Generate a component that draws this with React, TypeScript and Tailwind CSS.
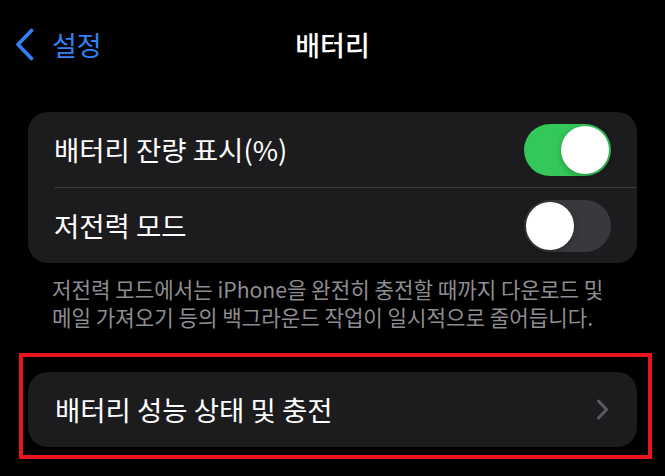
import React, { useState } from 'react';

const font = { fontFamily: '"Noto Sans CJK KR", "Noto Sans", sans-serif' };

interface ToggleProps {
  on: boolean;
  onChange: (v: boolean) => void;
}

const Toggle: React.FC<ToggleProps> = ({ on, onChange }) => (
  <button
    type="button"
    onClick={() => onChange(!on)}
    className={`flex h-[52px] w-[87px] shrink-0 items-center rounded-full p-[2px] ${on ? 'justify-end bg-[#34c759]' : 'justify-start bg-[#39393d]'}`}
  >
    <span className="block h-[48px] w-[48px] rounded-full bg-white shadow-[0_2px_6px_rgba(0,0,0,0.25)]" />
  </button>
);

const App: React.FC = () => {
  const [showPercent, setShowPercent] = useState(true);
  const [lowPower, setLowPower] = useState(false);

  return (
    <div className="h-[476px] w-full overflow-hidden bg-black text-white" style={font}>
      {/* navigation bar */}
      <div className="grid h-[88px] grid-cols-[1fr_auto_1fr] items-center">
        <div className="flex items-center gap-[18px] pl-[15px] text-[#3182f6]">
          <svg width="19" height="33" viewBox="0 0 19 33" fill="none">
            <path d="M16.5 2.5L3 16.5l13.5 14" stroke="currentColor" strokeWidth="3.6" strokeLinecap="round" strokeLinejoin="round" />
          </svg>
          <span className="text-[27px] leading-none">설정</span>
        </div>
        <h1 className="text-[27px] font-medium leading-none">배터리</h1>
        <div />
      </div>

      <div className="px-[28px]">
        {/* battery display group */}
        <div className="mt-[24px] rounded-[20px] bg-[#1c1c1e]">
          <div className="flex h-[75px] items-center justify-between pl-[26px] pr-[26px]">
            <span className="text-[27.5px] leading-none">배터리 잔량 표시(%)</span>
            <Toggle on={showPercent} onChange={setShowPercent} />
          </div>
          <div className="ml-[26px] h-px bg-[#38383a]" />
          <div className="flex h-[75px] items-center justify-between pl-[26px] pr-[26px]">
            <span className="text-[27.5px] leading-none">저전력 모드</span>
            <Toggle on={lowPower} onChange={setLowPower} />
          </div>
        </div>

        <p className="mt-[12px] whitespace-nowrap px-[24px] text-[21.2px] leading-[28px] text-[#8d8d93]">
          저전력 모드에서는 iPhone을 완전히 충전할 때까지 다운로드 및
          <br />
          메일 가져오기 등의 백그라운드 작업이 일시적으로 줄어듭니다.
        </p>
      </div>

      {/* battery health link, outlined */}
      <div className="ml-[19px] mr-[13px] mt-[22px] border-4 border-[#e8141c] pb-[8px] pl-[5px] pr-[11px] pt-[15px]">
        <div className="flex h-[75px] items-center justify-between rounded-[20px] bg-[#1c1c1e] pl-[27px] pr-[28px]">
          <span className="text-[27.5px] leading-none">배터리 성능 상태 및 충전</span>
          <svg width="13" height="21" viewBox="0 0 13 21" fill="none">
            <path d="M2.5 2l8 8.5-8 8.5" stroke="#5b5b60" strokeWidth="3" strokeLinecap="round" strokeLinejoin="round" />
          </svg>
        </div>
      </div>
    </div>
  );
};

export default App;
